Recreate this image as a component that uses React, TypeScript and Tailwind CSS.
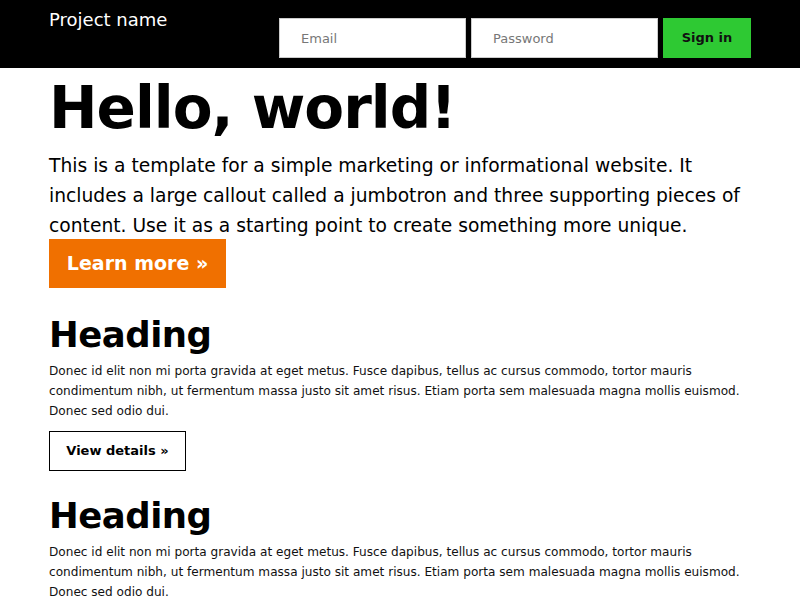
import React from "react";

const font = { fontFamily: '"DejaVu Sans", Verdana, sans-serif' };

function Section() {
  return (
    <div className="flex flex-col items-start">
      <h2 className="text-[35.5px] font-bold leading-[40px] text-black tracking-[-0.5px]">Heading</h2>
      <p className="mt-[6px] text-[12.1px] leading-[20px] text-[#111]">
        Donec id elit non mi porta gravida at eget metus. Fusce dapibus, tellus ac cursus commodo, tortor mauris condimentum nibh, ut fermentum massa justo sit amet risus. Etiam porta sem malesuada magna mollis euismod. Donec sed odio dui.
      </p>
      <button className="mt-[10px] h-[40px] w-[137px] border border-black bg-white text-[13px] font-bold text-black">
        View details »
      </button>
    </div>
  );
}

export default function App() {
  return (
    <div className="min-h-[600px] w-[800px] bg-white" style={font}>
      <div className="flex h-[68px] items-start justify-between bg-black px-[49px]">
        <div className="pt-[8px] text-[18px] leading-[24px] text-white">Project name</div>
        <div className="flex gap-[5px] pt-[18px]">
          <input
            placeholder="Email"
            className="h-[40px] w-[187px] border border-[#ccc] bg-white px-[21px] text-[13px] text-black placeholder:text-[#777] outline-none"
          />
          <input
            placeholder="Password"
            className="h-[40px] w-[187px] border border-[#ccc] bg-white px-[21px] text-[13px] text-black placeholder:text-[#777] outline-none"
          />
          <button className="h-[40px] w-[88px] bg-[#2ec933] text-[13px] font-bold text-[#111]">Sign in</button>
        </div>
      </div>
      <div className="px-[49px]">
        <h1 className="mt-[5px] text-[58px] font-bold leading-[70px] text-black tracking-[-1px]">Hello, world!</h1>
        <p className="mt-[8px] text-[18.7px] leading-[30px] text-black">
          This is a template for a simple marketing or informational website. It includes a large callout called a jumbotron and three supporting pieces of content. Use it as a starting point to create something more unique.
        </p>
        <button className="-mt-[2px] h-[49px] w-[177px] bg-[#f07000] text-[19px] font-bold text-white">
          Learn more »
        </button>
        <div className="mt-[27px] flex flex-col gap-[25px]">
          <Section />
          <Section />
        </div>
      </div>
    </div>
  );
}
